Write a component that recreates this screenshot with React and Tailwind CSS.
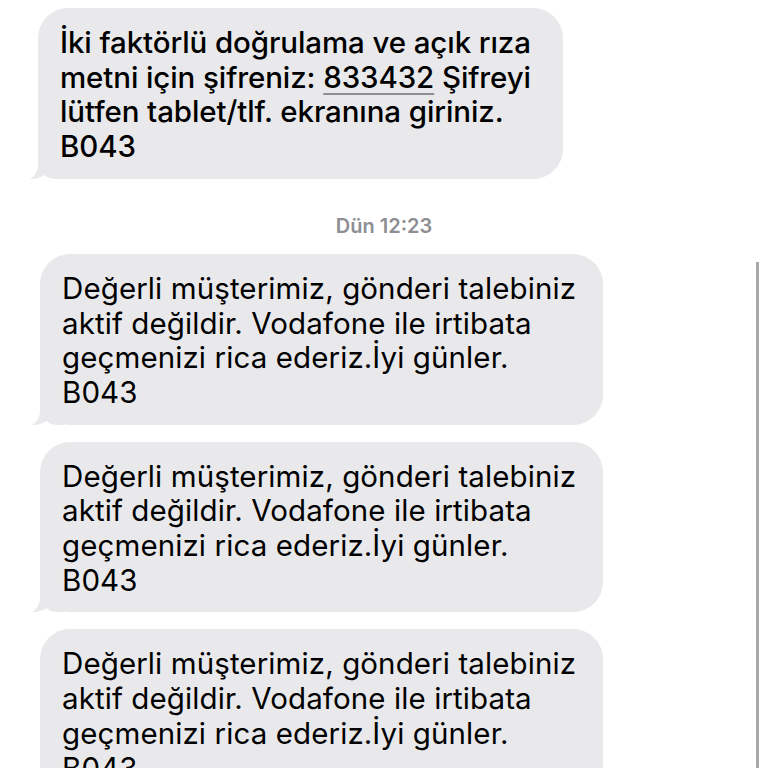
import React from "react";

const textFont = { fontFamily: "Inter, 'Noto Sans', sans-serif" };

function Tail() {
  // little hook at the bottom-left of a received bubble
  return (
    <svg
      className="absolute -left-[8px] bottom-0"
      width="32"
      height="26"
      viewBox="0 0 32 26"
    >
      <path
        d="M8 0 L8 12 C8 18 5 23 0 26 C6 26 11 24.5 14.5 22 C18 25 22 26 27 26 L32 26 L32 0 Z"
        fill="#e9e9eb"
      />
    </svg>
  );
}

function Bubble({ width, lines, className = "" }) {
  return (
    <div
      className={`relative rounded-[30px] bg-[#e9e9eb] pl-[22px] pt-[17px] pb-[15px] ${className}`}
      style={{ width }}
    >
      <div className="relative text-[29.5px] leading-[34.7px] text-black">
        {lines.map((line, i) => (
          <span key={i} className="block whitespace-nowrap">
            {line}
          </span>
        ))}
      </div>
      <Tail />
    </div>
  );
}

const vodafoneLines = [
  "Değerli müşterimiz, gönderi talebiniz",
  "aktif değildir. Vodafone ile irtibata",
  "geçmenizi rica ederiz.İyi günler.",
  "B043",
];

export default function App() {
  return (
    <div className="relative h-[768px] w-[768px] overflow-hidden bg-white" style={textFont}>
      <div className="flex flex-col pt-[8px]">
        <div className="ml-[38px]">
          <Bubble
            width={525}
            className="font-medium tracking-[-0.1px]"
            lines={[
              "İki faktörlü doğrulama ve açık rıza",
              <>
                metni için şifreniz:{" "}
                <span className="underline decoration-[#8e8e93] decoration-[1.5px] underline-offset-[5px]">
                  833432
                </span>{" "}
                Şifreyi
              </>,
              "lütfen tablet/tlf. ekranına giriniz.",
              "B043",
            ]}
          />
        </div>

        <div className="mt-[35px] mb-[16px] text-center text-[20px] leading-[24px] font-semibold text-[#8e8e93]">
          Dün 12:23
        </div>

        <div className="ml-[40px] flex flex-col gap-[17px] tracking-[0.1px]">
          <Bubble width={563} lines={vodafoneLines} />
          <Bubble width={563} lines={vodafoneLines} />
          <Bubble width={563} lines={vodafoneLines} />
        </div>
      </div>

      {/* scroll indicator */}
      <div className="absolute left-[756px] top-[262px] bottom-0 w-[3px] bg-[#a9a9a9]" />
    </div>
  );
}
